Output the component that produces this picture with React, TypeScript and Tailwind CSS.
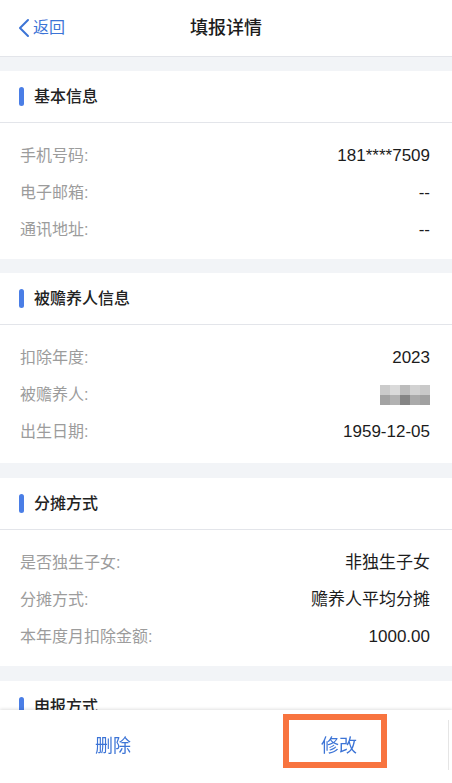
import React from "react"

const font = {
  fontFamily: '"Liberation Sans", "Noto Sans CJK SC", sans-serif',
}

type Row = { label: string; value?: string; blur?: boolean }

const sections: { title: string; rows: Row[]; pb: string; gap: string }[] = [
  {
    title: "基本信息",
    pb: "pb-[11px]",
    gap: "mt-[14px]",
    rows: [
      { label: "手机号码:", value: "181****7509" },
      { label: "电子邮箱:", value: "--" },
      { label: "通讯地址:", value: "--" },
    ],
  },
  {
    title: "被赡养人信息",
    pb: "pb-[13px]",
    gap: "mt-[14px]",
    rows: [
      { label: "扣除年度:", value: "2023" },
      { label: "被赡养人:", blur: true },
      { label: "出生日期:", value: "1959-12-05" },
    ],
  },
  {
    title: "分摊方式",
    pb: "pb-[11px]",
    gap: "mt-[15px]",
    rows: [
      { label: "是否独生子女:", value: "非独生子女" },
      { label: "分摊方式:", value: "赡养人平均分摊" },
      { label: "本年度月扣除金额:", value: "1000.00" },
    ],
  },
]

function SectionTitle({ title }: { title: string }) {
  return (
    <div className="h-[52px] flex items-center border-b border-[#e3e5ea] px-[19px]">
      <span className="w-[5px] h-[19px] rounded-full bg-[#4a7ee6]" />
      <span className="ml-[10px] text-[16px] font-medium text-[#222]">{title}</span>
    </div>
  )
}

function Mosaic() {
  const top = ["#cbcbcb", "#dadada", "#bcbcbc", "#d2d2d2", "#c9c9c9"]
  const bottom = ["#a3a3a3", "#b2b2b2", "#858585", "#aaaaaa", "#a1a1a1"]
  return (
    <div className="grid grid-cols-5 w-[50px]">
      {[...top, ...bottom].map((c, i) => (
        <div key={i} className="h-[10px]" style={{ backgroundColor: c }} />
      ))}
    </div>
  )
}

export default function App() {
  return (
    <div className="h-[783px] overflow-hidden bg-[#f2f4f7]" style={font}>
      {/* Header */}
      <div className="h-[57px] bg-white border-b border-[#e3e5ea] flex items-center relative">
        <div className="flex items-center pl-[17px] text-[#3c74d6]">
          <svg width="14" height="20" viewBox="0 0 14 20" fill="none">
            <path d="M11 2L3 10l8 8" stroke="currentColor" strokeWidth="2" strokeLinecap="round" strokeLinejoin="round" />
          </svg>
          <span className="ml-[2px] text-[16px]">返回</span>
        </div>
        <div className="absolute left-0 right-0 text-center text-[18px] font-medium text-[#1c1c1c] pointer-events-none">
          填报详情
        </div>
      </div>

      {sections.map(s => (
        <div key={s.title} className={`bg-white ${s.gap}`}>
          <SectionTitle title={s.title} />
          <div className={`pt-[14px] ${s.pb} pl-[20px] pr-[22px]`}>
            {s.rows.map(r => (
              <div key={r.label} className="h-[37px] flex items-center justify-between">
                <span className="text-[16px] text-[#9c9c9c]">{r.label}</span>
                {r.blur ? (
                  <Mosaic />
                ) : (
                  <span className="text-[17px] text-[#1c1c1c]">{r.value}</span>
                )}
              </div>
            ))}
          </div>
        </div>
      ))}
      <div className="bg-white mt-[15px]">
        <SectionTitle title="申报方式" />
        <div className="h-[120px]" />
      </div>

      {/* Bottom bar */}
      <div className="fixed bottom-0 left-0 right-0 h-[73px] bg-white flex shadow-[0_-1px_3px_rgba(0,0,0,0.12)]">
        <div className="flex-1 flex items-center justify-center text-[18px] text-[#3c74d6]">删除</div>
        <div className="flex-1 flex items-center justify-center text-[18px] text-[#3c74d6] relative">
          <span className="absolute w-[104px] h-[54px] border-[6px] border-[#f8743f] top-[4px] left-[57px]" />
          修改
        </div>
        <span className="absolute right-[3px] top-[10px] w-px h-[50px] bg-[#e5e5e5]" />
      </div>
    </div>
  )
}
